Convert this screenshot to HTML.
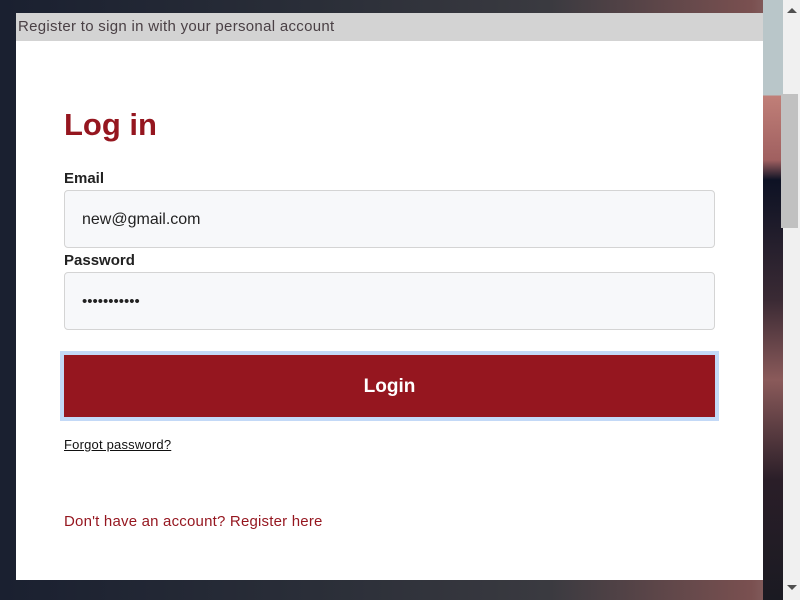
<!DOCTYPE html>
<html><head><style>
html,body{margin:0;padding:0;width:800px;height:600px;overflow:hidden;font-family:"Liberation Sans",sans-serif}
.bg{position:absolute;left:0;top:0;width:783px;height:600px;background:linear-gradient(90deg,#1a2030 0%,#2a2e38 40%,#3a3a40 70%,#7a5050 96%,#8a6a6a 100%)}
.bg2{position:absolute;left:763px;top:0;width:20px;height:600px;background:linear-gradient(180deg,#b9c6c9 0,#b9c6c9 95px,#c07f78 96px,#a06060 160px,#0d1224 180px,#3a2a34 300px,#8a5a5a 380px,#2a1e28 480px,#1a1a22 600px)}
.sb{position:absolute;left:783px;top:0;width:17px;height:600px;background:#f0f0f0}
.thumb{position:absolute;left:781px;top:94px;width:17px;height:134px;background:#c1c1c1}
.panel{position:absolute;left:16px;top:13px;width:747px;height:567px;background:#fff}
.hdr{height:28px;background:#d3d3d3;color:#4a4045;font-size:15px;line-height:28px;padding-left:2px;letter-spacing:0.3px}
h1{position:absolute;left:48px;top:94px;margin:0;font-size:31px;color:#95161f;font-weight:bold}
.lbl{position:absolute;left:48px;font-size:15px;font-weight:bold;color:#222}
.inp{position:absolute;left:48px;width:651px;height:58px;background:#f7f8fa;border:1px solid #d4d4d4;border-radius:4px;box-sizing:border-box;font-size:16px;line-height:58px;padding-left:17px;color:#222}
.btn{position:absolute;left:44px;top:338px;width:659px;height:70px;box-sizing:border-box;border:4px solid #c3d9f7;background:#95161f;color:#fff;font-weight:bold;font-size:19px;text-align:center;line-height:64px}
.fp{position:absolute;left:48px;top:424px;font-size:13px;color:#111;text-decoration:underline;letter-spacing:0.2px}
.reg{position:absolute;left:48px;top:500px;font-size:15px;color:#95161f;letter-spacing:0.2px}
</style></head><body>
<div class="bg"></div><div class="bg2"></div>
<div class="sb"><div style="position:absolute;left:4px;top:8px;border:5px solid transparent;border-bottom:5px solid #505050;border-top:0"></div><div style="position:absolute;left:4px;top:585px;border:5px solid transparent;border-top:5px solid #505050;border-bottom:0"></div></div>
<div class="thumb"></div>
<div class="panel">
<div class="hdr">Register to sign in with your personal account</div>
<h1>Log in</h1>
<div class="lbl" style="top:157px">Email</div>
<div class="inp" style="top:177px">new@gmail.com</div>
<div class="lbl" style="top:239px">Password</div>
<div class="inp" style="top:259px;font-size:15px;letter-spacing:0px">•••••••••••</div>
<div class="btn">Login</div>
<div class="fp">Forgot password?</div>
<div class="reg">Don't have an account? Register here</div>
</div>
</body></html>
